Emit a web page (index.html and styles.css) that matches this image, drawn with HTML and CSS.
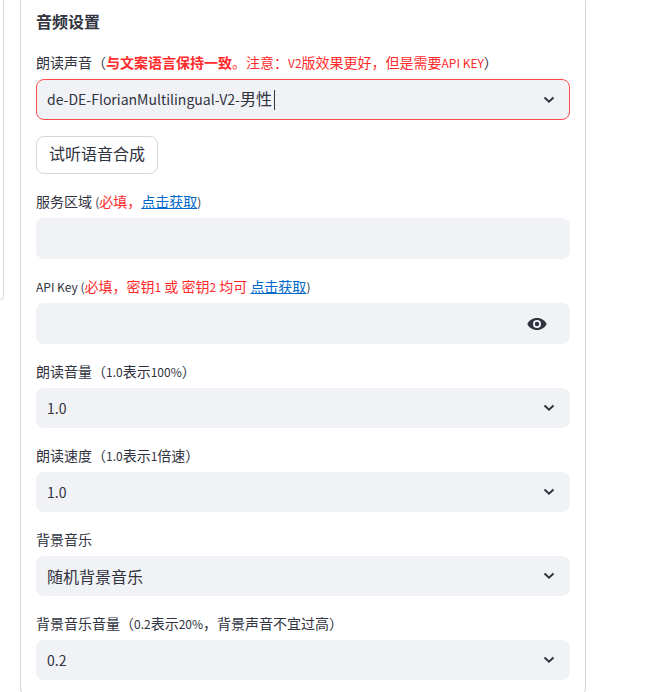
FILE: index.html
```html
<!DOCTYPE html>
<html lang="zh-CN">
<head>
  <meta charset="UTF-8" />
  <meta name="viewport" content="width=device-width, initial-scale=1.0" />
  <title>音频设置</title>
  <link rel="stylesheet" href="styles.css">
</head>
<body>

  <main class="columns">
    <section class="card card-prev"></section>

    <section class="card">
      <h2>音频设置</h2>

      <div class="field">
        <label for="voice">朗读声音（<span class="red"><strong>与文案语言保持一致</strong>。注意：<span class="latin">V2</span>版效果更好，但是需要<span class="latin">API KEY</span></span>）</label>
        <div class="control active">
          <div class="value">de-DE-FlorianMultilingual-V2-<span class="cjk">男性</span></div>
          <span class="caret"></span>
          <input id="voice" type="text" role="combobox" aria-expanded="false">
          <svg class="chevron" viewBox="0 0 12 8"><path d="M1.5 1.5 6 5.7l4.500-4.200" /></svg>
        </div>
      </div>

      <button class="btn" type="button">试听语音合成</button>

      <div class="field">
        <label for="region">服务区域 <span class="latin">(</span><span class="red">必填，</span><a href="#region">点击获取</a><span class="latin">)</span></label>
        <div class="control">
          <input id="region" type="text">
        </div>
      </div>

      <div class="field">
        <label for="key"><span class="latin">API Key (</span><span class="red">必填，密钥<span class="latin">1</span> 或 密钥<span class="latin">2</span> 均可 </span><a href="#key">点击获取</a><span class="latin">)</span></label>
        <div class="control">
          <input id="key" type="password">
          <button class="eye" type="button" aria-label="显示密钥">
            <svg viewBox="0 0 20 14"><path fill-rule="evenodd" d="M10 1C5.500 1 2 3.500.300 7c1.700 3.500 5.200 6 9.700 6s8-2.500 9.700-6C18 3.500 14.500 1 10 1zm0 10a4 4 0 1 1 0-8 4 4 0 0 1 0 8zm0-6.200a2.200 2.200 0 1 0 0 4.400 2.200 2.200 0 0 0 0-4.400z" /></svg>
          </button>
        </div>
      </div>

      <div class="field">
        <label for="volume">朗读音量（<span class="latin">1.0</span>表示<span class="latin">100%</span>）</label>
        <div class="control select">
          <select id="volume"><option>1.0</option></select>
          <svg class="chevron" viewBox="0 0 12 8"><path d="M1.5 1.5 6 5.7l4.500-4.200" /></svg>
        </div>
      </div>

      <div class="field">
        <label for="rate">朗读速度（<span class="latin">1.0</span>表示<span class="latin">1</span>倍速）</label>
        <div class="control select">
          <select id="rate"><option>1.0</option></select>
          <svg class="chevron" viewBox="0 0 12 8"><path d="M1.5 1.5 6 5.7l4.500-4.200" /></svg>
        </div>
      </div>

      <div class="field">
        <label for="bgm">背景音乐</label>
        <div class="control select">
          <select id="bgm" class="cjk"><option>随机背景音乐</option></select>
          <svg class="chevron" viewBox="0 0 12 8"><path d="M1.5 1.5 6 5.7l4.500-4.200" /></svg>
        </div>
      </div>

      <div class="field">
        <label for="bgm-volume">背景音乐音量（<span class="latin">0.2</span>表示<span class="latin">20%</span>，背景声音不宜过高）</label>
        <div class="control select">
          <select id="bgm-volume"><option>0.2</option></select>
          <svg class="chevron" viewBox="0 0 12 8"><path d="M1.5 1.5 6 5.7l4.500-4.200" /></svg>
        </div>
      </div>
    </section>
  </main>

</body>
</html>
```
FILE: styles.css
```css
* {
  box-sizing: border-box;
}

body {
  margin: 0;
  background: #fff;
  color: #31333f;
  font-family: "Noto Sans CJK SC", sans-serif;
  overflow: hidden;
}

/* Columns */
.columns {
  display: grid;
  grid-template-columns: 4px 1fr;
  align-items: start;
  gap: 16px;
  padding-right: 60px;
  margin-top: -6px;
}

.card {
  display: flex;
  flex-direction: column;
  gap: 16px;
  padding: 12px 15px 15px;
  border: 1px solid #d6d6d9;
  border-radius: 8px;
}

.card-prev {
  height: 306px;
  padding: 0;
  border-left: 0;
  border-radius: 0 8px 8px 0;
}

h2 {
  margin: 0;
  font-size: 16px;
  line-height: 28px;
  font-weight: 700;
}

.field {
  display: flex;
  flex-direction: column;
}

label {
  height: 28px;
  font-size: 14px;
  line-height: 22px;
  white-space: nowrap;
}

/* latin text runs smaller than the chinese around it */
.latin {
  font-size: 12px;
}

.red {
  color: #ff2b2b;
}

a {
  color: #0068c9;
  text-decoration: underline;
}

/* Controls */
.control {
  display: flex;
  align-items: center;
  position: relative;
  height: 41px;
  padding: 0 10px;
  border: 1px solid transparent;
  border-radius: 8px;
  background: #f0f2f6;
}

.control.select {
  height: 40px;
}

.control.active {
  border-color: #ff4b4b;
}

.value {
  padding-bottom: 3px;
  font-size: 14px;
  white-space: nowrap;
}

input,
select {
  flex: 1;
  min-width: 0;
  height: 100%;
  margin: 0;
  padding: 0;
  border: 0;
  outline: 0;
  appearance: none;
  background: transparent;
  color: #31333f;
  font: 14px "Noto Sans CJK SC", sans-serif;
}

.cjk {
  font-size: 16px;
}

.caret {
  width: 1px;
  height: 20px;
  margin-left: 2px;
  background: #31333f;
}

.chevron {
  position: absolute;
  right: 14px;
  width: 12px;
  height: 8px;
  fill: none;
  stroke: #31333f;
  stroke-width: 2;
  pointer-events: none;
}

.eye {
  display: flex;
  margin-right: 12px;
  padding: 0;
  border: 0;
  background: transparent;
}

.eye svg {
  width: 20px;
  height: 14px;
  fill: #31333f;
}

.btn {
  align-self: flex-start;
  height: 38px;
  padding: 0 12px 4px;
  border: 1px solid #d6d6d9;
  border-radius: 8px;
  background: #fff;
  color: #31333f;
  font: 16px "Noto Sans CJK SC", sans-serif;
}
```
